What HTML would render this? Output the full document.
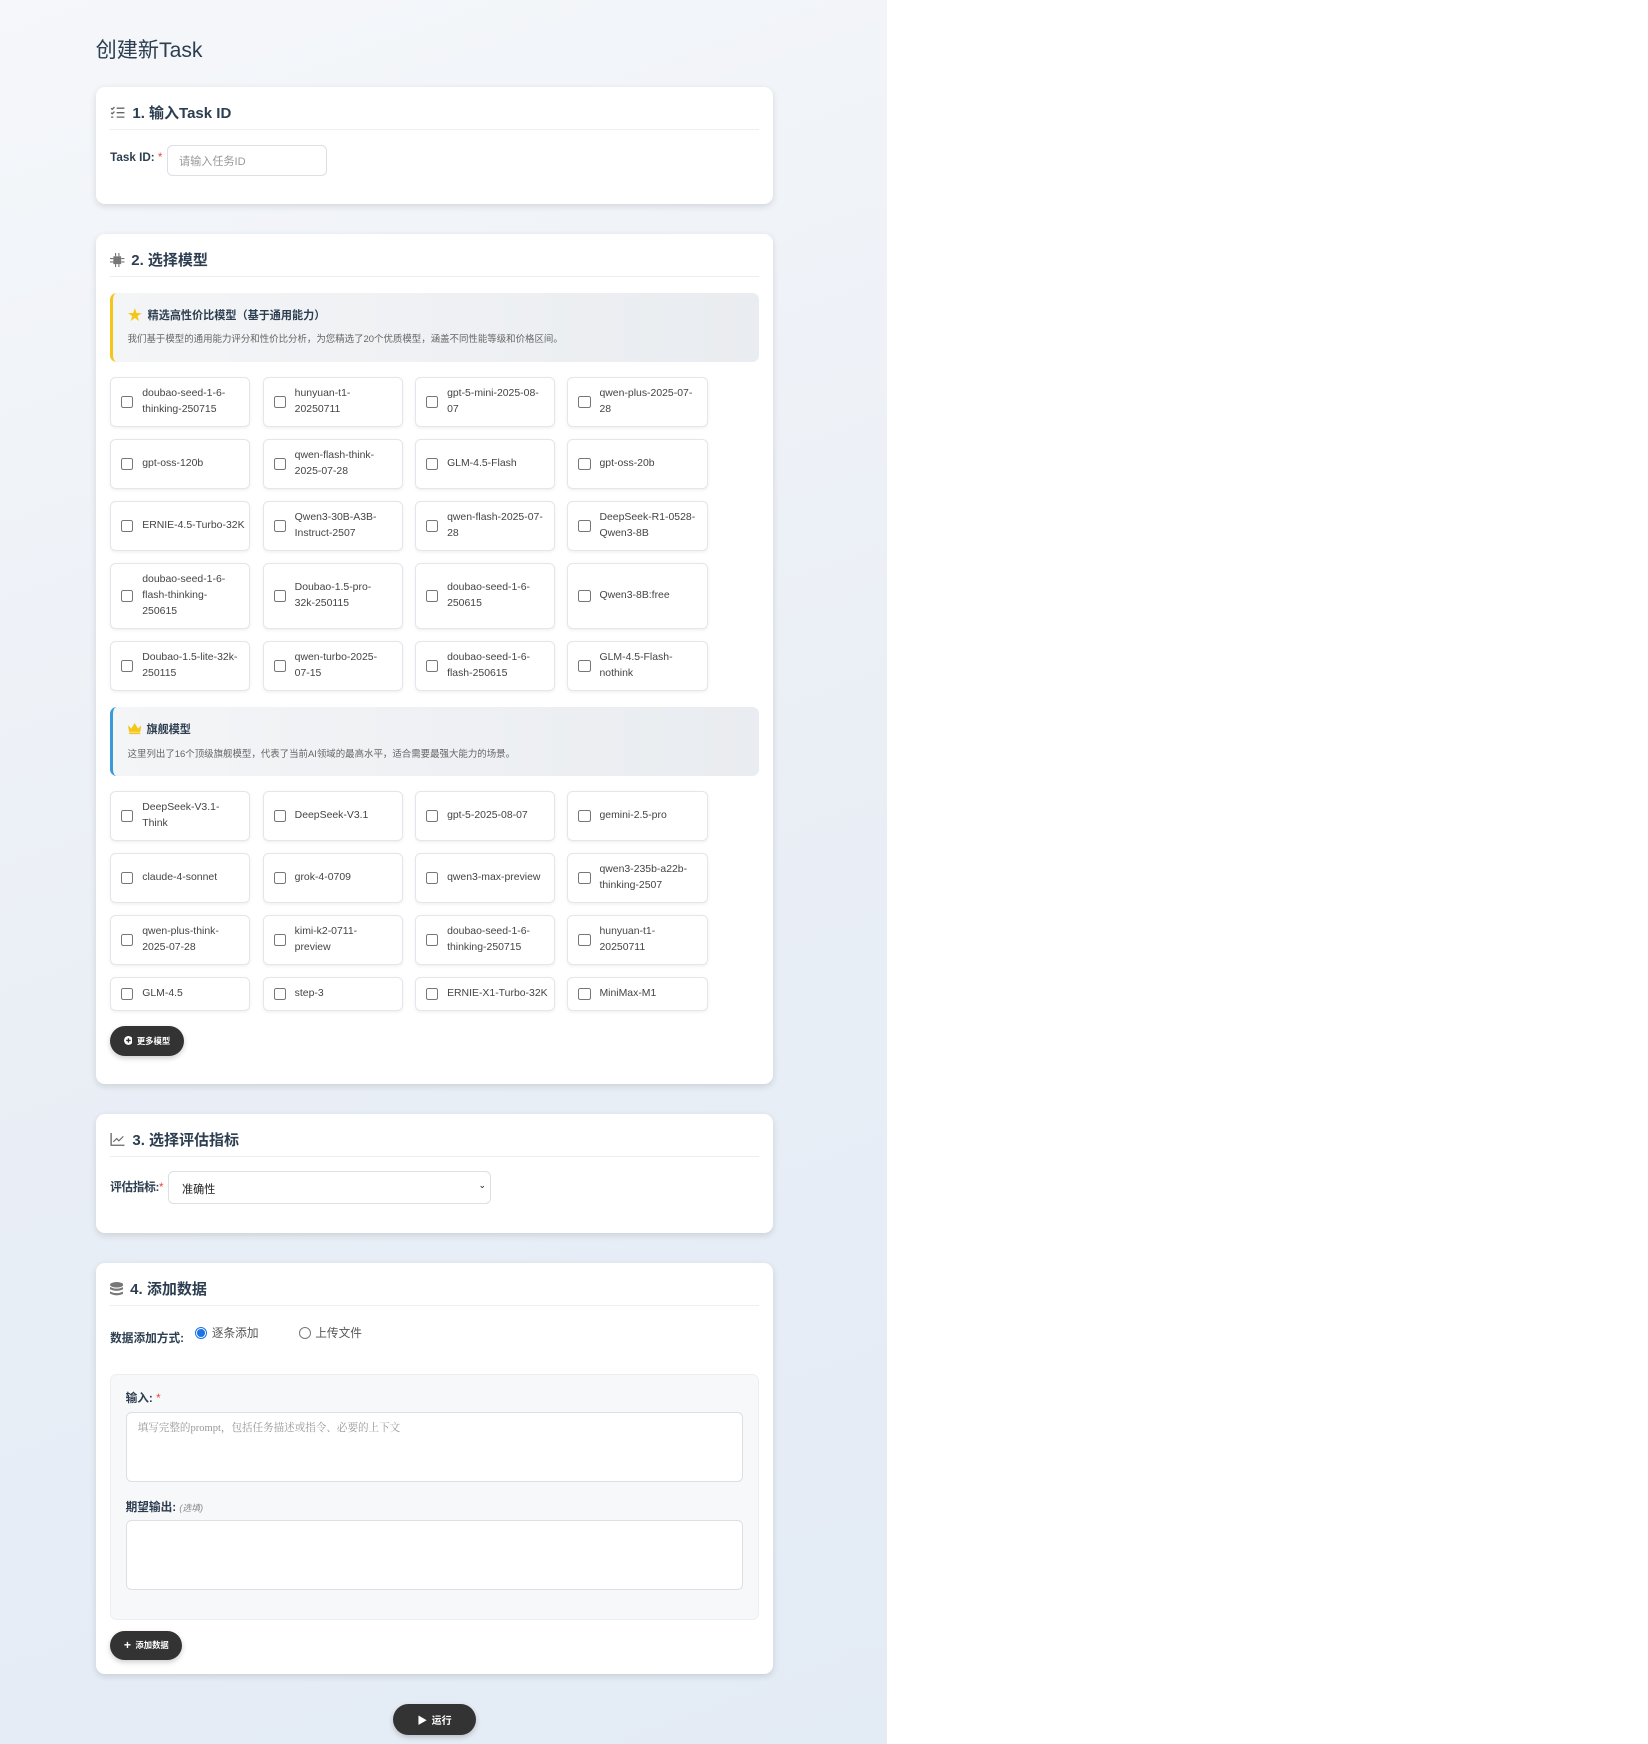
<!DOCTYPE html>
<html><head><meta charset="utf-8"><style>
*{box-sizing:border-box;margin:0;padding:0}
html,body{width:1648px;height:1744px;background:#fff;overflow:hidden}
body{font-family:"Liberation Sans","Noto Sans CJK SC",sans-serif;color:#333}
#w{zoom:1.1125;width:1482px;height:1568px;position:relative}
#bg{position:absolute;left:0;top:0;width:797px;height:1568px;background:linear-gradient(160deg,#f5f7fa 0%,#eaeff6 50%,#e3ebf5 100%)}
h1{position:absolute;left:86px;top:30px;font-size:19px;font-weight:400;color:#2c3e50}
.card{position:absolute;left:86px;width:609px;background:#fff;border-radius:8px;box-shadow:0 2px 6px rgba(0,0,0,.12);padding:13px}
.hd{height:26px;border-bottom:1px solid #eceef1;font-size:13.5px;font-weight:700;color:#2c3e50;display:flex;align-items:center;gap:6px;padding-bottom:4px}
.hd svg{flex:none}
.lbl{font-size:10.5px;font-weight:700;color:#2c3e50}
.req{color:#e74c3c;font-weight:400}
.inp{border:1px solid #dcdfe4;border-radius:5px;background:#fff}
.ban{margin-top:14px;height:62px;border-radius:6px;background:linear-gradient(90deg,#f4f5f7,#e9ecf0);padding:12px 13px;}
.ban .t{font-size:10px;font-weight:700;color:#2c3e50;display:flex;align-items:center;gap:5px;height:16px}
.ban .d{font-size:8.5px;color:#666;margin-top:7px}
.grid{display:grid;grid-template-columns:repeat(4,126px);gap:11px;margin-top:14px}
.it{border:1px solid #e3e6ea;border-radius:5px;box-shadow:0 1px 3px rgba(0,0,0,.06);padding:7px 4px 7px 9px;display:flex;align-items:center;font-size:9.4px;color:#444;line-height:14.5px;min-height:30px;white-space:nowrap;overflow:hidden}
.cb{width:11px;height:11px;border:1px solid #777;border-radius:2px;flex:none;margin-right:8px}
.btn{background:#333;color:#fff;border-radius:14px;display:inline-flex;align-items:center;justify-content:center;font-size:7.5px;font-weight:700;gap:4px;box-shadow:0 2px 5px rgba(0,0,0,.2)}
.ta{height:63px;border:1px solid #dcdfe4;border-radius:5px;background:#fff;padding:6px 10px;font-family:"Liberation Serif","Noto Serif CJK SC",serif;font-size:9.5px;color:#999}
</style></head><body><div id="w">
<div id="bg"></div>
<h1>创建新Task</h1>

<div class="card" style="top:78px;height:105px">
<div class="hd"><svg width="14" height="12" viewBox="0 0 14 12"><g stroke="#666" stroke-width="1.2" fill="none"><path d="M1 2l1 1 2-2M1 6l1 1 2-2M1 10h2"/><path d="M6 2h7M6 6h7M6 10h7"/></g></svg>1. 输入Task ID</div>
<div style="display:flex;margin-top:13px;align-items:flex-start"><span class="lbl" style="margin-top:6px">Task ID: <span class="req">*</span></span>
<div class="inp" style="width:144px;height:28px;margin-left:4px;font-size:10px;color:#999;padding:7px 10px">请输入任务ID</div></div>
</div>

<div class="card" style="top:210px;height:764px">
<div class="hd"><svg width="13" height="13" viewBox="0 0 13 13"><rect x="3" y="3" width="7" height="7" fill="#777"/><g stroke="#777" stroke-width="1"><path d="M5 0v3M8 0v3M5 10v3M8 10v3M0 5h3M0 8h3M10 5h3M10 8h3"/></g></svg>2. 选择模型</div>
<div class="ban" style="border-left:3px solid #f5c518"><div class="t"><span style="color:#f5c518;font-size:13px">★</span>精选高性价比模型（基于通用能力）</div><div class="d">我们基于模型的通用能力评分和性价比分析，为您精选了20个优质模型，涵盖不同性能等级和价格区间。</div></div>
<div class="grid">
<div class="it"><span class="cb"></span><span>doubao-seed-1-6-<br>thinking-250715</span></div>
<div class="it"><span class="cb"></span><span>hunyuan-t1-<br>20250711</span></div>
<div class="it"><span class="cb"></span><span>gpt-5-mini-2025-08-<br>07</span></div>
<div class="it"><span class="cb"></span><span>qwen-plus-2025-07-<br>28</span></div>
<div class="it"><span class="cb"></span><span>gpt-oss-120b</span></div>
<div class="it"><span class="cb"></span><span>qwen-flash-think-<br>2025-07-28</span></div>
<div class="it"><span class="cb"></span><span>GLM-4.5-Flash</span></div>
<div class="it"><span class="cb"></span><span>gpt-oss-20b</span></div>
<div class="it"><span class="cb"></span><span>ERNIE-4.5-Turbo-32K</span></div>
<div class="it"><span class="cb"></span><span>Qwen3-30B-A3B-<br>Instruct-2507</span></div>
<div class="it"><span class="cb"></span><span>qwen-flash-2025-07-<br>28</span></div>
<div class="it"><span class="cb"></span><span>DeepSeek-R1-0528-<br>Qwen3-8B</span></div>
<div class="it"><span class="cb"></span><span>doubao-seed-1-6-<br>flash-thinking-<br>250615</span></div>
<div class="it"><span class="cb"></span><span>Doubao-1.5-pro-<br>32k-250115</span></div>
<div class="it"><span class="cb"></span><span>doubao-seed-1-6-<br>250615</span></div>
<div class="it"><span class="cb"></span><span>Qwen3-8B:free</span></div>
<div class="it"><span class="cb"></span><span>Doubao-1.5-lite-32k-<br>250115</span></div>
<div class="it"><span class="cb"></span><span>qwen-turbo-2025-<br>07-15</span></div>
<div class="it"><span class="cb"></span><span>doubao-seed-1-6-<br>flash-250615</span></div>
<div class="it"><span class="cb"></span><span>GLM-4.5-Flash-<br>nothink</span></div>
</div>
<div class="ban" style="border-left:3px solid #3a9ad9"><div class="t"><svg width="12" height="10" viewBox="0 0 12 10"><path d="M0 2l3 3 3-5 3 5 3-3-1 6H1z" fill="#f5c518"/><rect x="1" y="8.5" width="10" height="1.5" fill="#f5c518"/></svg>旗舰模型</div><div class="d">这里列出了16个顶级旗舰模型，代表了当前AI领域的最高水平，适合需要最强大能力的场景。</div></div>
<div class="grid">
<div class="it"><span class="cb"></span><span>DeepSeek-V3.1-<br>Think</span></div>
<div class="it"><span class="cb"></span><span>DeepSeek-V3.1</span></div>
<div class="it"><span class="cb"></span><span>gpt-5-2025-08-07</span></div>
<div class="it"><span class="cb"></span><span>gemini-2.5-pro</span></div>
<div class="it"><span class="cb"></span><span>claude-4-sonnet</span></div>
<div class="it"><span class="cb"></span><span>grok-4-0709</span></div>
<div class="it"><span class="cb"></span><span>qwen3-max-preview</span></div>
<div class="it"><span class="cb"></span><span>qwen3-235b-a22b-<br>thinking-2507</span></div>
<div class="it"><span class="cb"></span><span>qwen-plus-think-<br>2025-07-28</span></div>
<div class="it"><span class="cb"></span><span>kimi-k2-0711-<br>preview</span></div>
<div class="it"><span class="cb"></span><span>doubao-seed-1-6-<br>thinking-250715</span></div>
<div class="it"><span class="cb"></span><span>hunyuan-t1-<br>20250711</span></div>
<div class="it"><span class="cb"></span><span>GLM-4.5</span></div>
<div class="it"><span class="cb"></span><span>step-3</span></div>
<div class="it"><span class="cb"></span><span>ERNIE-X1-Turbo-32K</span></div>
<div class="it"><span class="cb"></span><span>MiniMax-M1</span></div>
</div>
<div class="btn" style="position:absolute;left:13px;top:712px;width:66px;height:27px"><svg width="8" height="8" viewBox="0 0 8 8"><circle cx="4" cy="4" r="4" fill="#fff"/><path d="M4 2v4M2 4h4" stroke="#333" stroke-width="1.2"/></svg>更多模型</div>
</div>

<div class="card" style="top:1001px;height:107px">
<div class="hd"><svg width="14" height="12" viewBox="0 0 14 12"><path d="M1 0v11h12" stroke="#666" stroke-width="1.2" fill="none"/><path d="M3 8l3-3 2 2 4-4" stroke="#666" stroke-width="1" fill="none"/></svg>3. 选择评估指标</div>
<div style="display:flex;margin-top:13px;align-items:flex-start"><span class="lbl" style="margin-top:6px;letter-spacing:-0.3px">评估指标:<span class="req">*</span></span>
<div class="inp" style="width:291px;height:29px;margin-left:4px;font-size:10px;color:#222;padding:8px 12px;position:relative">准确性<span style="position:absolute;right:4px;top:7px;font-size:8px">⌄</span></div></div>
</div>

<div class="card" style="top:1135px;height:370px">
<div class="hd"><svg width="12" height="13" viewBox="0 0 12 13"><g fill="#777"><ellipse cx="6" cy="2.5" rx="6" ry="2.5"/><path d="M0 4.5q6 3 12 0v2q-6 3-12 0z"/><path d="M0 8.5q6 3 12 0v2q-6 3-12 0z"/></g></svg>4. 添加数据</div>
<div style="display:flex;align-items:flex-start;margin-top:16px;height:30px">
<span class="lbl" style="margin-top:5px">数据添加方式:</span>
<span style="margin-left:10px;display:flex;gap:4px;font-size:10.5px;color:#555"><span style="width:11px;height:11px;border:1px solid #1a73e8;border-radius:50%;display:inline-flex;align-items:center;justify-content:center;margin-top:3px"><span style="width:7px;height:7px;border-radius:50%;background:#1a73e8"></span></span>逐条添加</span>
<span style="margin-left:36px;display:flex;gap:4px;font-size:10.5px;color:#555"><span style="width:11px;height:11px;border:1px solid #777;border-radius:50%;margin-top:3px"></span>上传文件</span>
</div>
<div style="margin-top:15px;height:221px;background:#f7f8fa;border:1px solid #eceef1;border-radius:6px;padding:13px 13px">
<div class="lbl">输入: <span class="req">*</span></div>
<div class="ta" style="margin-top:5px">填写完整的prompt，包括任务描述或指令、必要的上下文</div>
<div class="lbl" style="margin-top:14px">期望输出: <i style="font-weight:400;color:#888;font-size:8px">(选填)</i></div>
<div class="ta" style="margin-top:5px"></div>
</div>
<div class="btn" style="position:absolute;left:13px;top:331px;width:65px;height:26px"><span style="font-size:11px">+</span>添加数据</div>
</div>

<div class="btn" style="position:absolute;left:353px;top:1532px;width:75px;height:28px;font-size:9px"><span style="font-size:9px">▶</span>运行</div>
</div></body></html>
